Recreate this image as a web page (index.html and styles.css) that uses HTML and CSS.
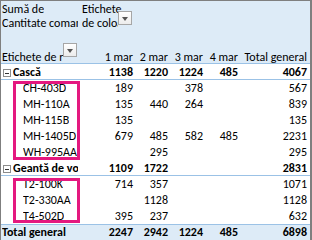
FILE: index.html
```html
<!DOCTYPE html>
<html lang="ro">
<head>
<meta charset="utf-8">
<title>PivotTable</title>
<link rel="stylesheet" href="styles.css">
</head>
<body>
<div class="sheet">
  <div class="pivot">
    <div class="row hdr">
      <div class="c"><span class="t">Sumă de</span></div>
      <div class="c"><span class="t">Etichete</span></div>
      <div class="c"></div><div class="c"></div><div class="c"></div><div class="c"></div>
    </div>
    <div class="row hdr">
      <div class="c"><span class="t">Cantitate comandată</span></div>
      <div class="c"><span class="t">de coloane</span><span class="dd dd-col"></span></div>
      <div class="c"></div><div class="c"></div><div class="c"></div><div class="c"></div>
    </div>
    <div class="row hdr">
      <div class="c"></div><div class="c"></div><div class="c"></div><div class="c"></div><div class="c"></div><div class="c"></div>
    </div>
    <div class="row hdr line-b">
      <div class="c"><span class="t">Etichete de rând</span><span class="dd dd-row"></span></div>
      <div class="c n">1 mar</div>
      <div class="c n">2 mar</div>
      <div class="c n">3 mar</div>
      <div class="c n">4 mar</div>
      <div class="c n">Total general</div>
    </div>

    <div class="row grp line-b">
      <div class="c"><span class="tog"></span><span class="t">Cască</span></div>
      <div class="c n">1138</div><div class="c n">1220</div><div class="c n">1224</div><div class="c n">485</div><div class="c n">4067</div>
    </div>
    <div class="row item">
      <div class="c anchor"><span class="t">CH-403D</span><span class="mark mark-1"></span></div>
      <div class="c n">189</div><div class="c n"></div><div class="c n">378</div><div class="c n"></div><div class="c n">567</div>
    </div>
    <div class="row item">
      <div class="c"><span class="t">MH-110A</span></div>
      <div class="c n">135</div><div class="c n">440</div><div class="c n">264</div><div class="c n"></div><div class="c n">839</div>
    </div>
    <div class="row item">
      <div class="c"><span class="t">MH-115B</span></div>
      <div class="c n">135</div><div class="c n"></div><div class="c n"></div><div class="c n"></div><div class="c n">135</div>
    </div>
    <div class="row item">
      <div class="c"><span class="t">MH-1405D</span></div>
      <div class="c n">679</div><div class="c n">485</div><div class="c n">582</div><div class="c n">485</div><div class="c n">2231</div>
    </div>
    <div class="row item">
      <div class="c"><span class="t">WH-995AA</span></div>
      <div class="c n"></div><div class="c n">295</div><div class="c n"></div><div class="c n"></div><div class="c n">295</div>
    </div>

    <div class="row grp line-b">
      <div class="c"><span class="tog"></span><span class="t">Geantă de voiaj</span></div>
      <div class="c n">1109</div><div class="c n">1722</div><div class="c n"></div><div class="c n"></div><div class="c n">2831</div>
    </div>
    <div class="row item">
      <div class="c anchor"><span class="t">T2-100K</span><span class="mark mark-2"></span></div>
      <div class="c n">714</div><div class="c n">357</div><div class="c n"></div><div class="c n"></div><div class="c n">1071</div>
    </div>
    <div class="row item">
      <div class="c"><span class="t">T2-330AA</span></div>
      <div class="c n"></div><div class="c n">1128</div><div class="c n"></div><div class="c n"></div><div class="c n">1128</div>
    </div>
    <div class="row item">
      <div class="c"><span class="t">T4-502D</span></div>
      <div class="c n">395</div><div class="c n">237</div><div class="c n"></div><div class="c n"></div><div class="c n">632</div>
    </div>

    <div class="row total">
      <div class="c"><span class="t">Total general</span></div>
      <div class="c n">2247</div><div class="c n">2942</div><div class="c n">1224</div><div class="c n">485</div><div class="c n">6898</div>
    </div>
  </div>
</div>
</body>
</html>
```
FILE: styles.css
```css
html, body {
  margin: 0;
  padding: 0;
  background: #ffffff;
}

.sheet {
  width: 309px;
  height: 239px;
  border-top: 1px solid #7f7f7f;
  border-left: 1px solid #7f7f7f;
  border-right: 2px solid #7f7f7f;
  overflow: hidden;
}

.pivot {
  display: grid;
  grid-template-columns: 80px 55px 35px 35px 35px 69px;
  grid-template-rows: 15px 14px 18px 16px repeat(11, 16px);
  font-family: "Carlito", "Lato", sans-serif;
  font-size: 12px;
  line-height: 13px;
  color: #000000;
}

.row {
  display: contents;
}

.c {
  display: flex;
  align-items: flex-end;
  padding: 0 3px 1px 1px;
  white-space: nowrap;
  min-width: 0;
}

.c.n {
  justify-content: flex-end;
}

.t {
  flex: 0 1 auto;
  min-width: 0;
  overflow: hidden;
}

.hdr > .c {
  background: #ddebf7;
  padding-bottom: 0;
}

.line-b > .c {
  box-shadow: inset 0 -1px 0 #9bc2e6;
}

.grp > .c {
  font-weight: 700;
}

.item > .c:first-child {
  padding-left: 22px;
}

.total > .c {
  background: #ddebf7;
  box-shadow: inset 0 1px 0 #9bc2e6;
  font-weight: 700;
}

/* filter dropdown buttons */
.dd {
  flex: none;
  align-self: flex-end;
  width: 12px;
  height: 12px;
  margin-left: auto;
  margin-right: 1px;
  border: 1px solid #a6a6a6;
  background: linear-gradient(#ffffff, #ececec);
  display: flex;
  align-items: center;
  justify-content: center;
}

.dd::after {
  content: "";
  width: 0;
  height: 0;
  border-left: 3.5px solid transparent;
  border-right: 3.5px solid transparent;
  border-top: 4px solid #555555;
  margin-top: 1px;
}

.dd-col {
  margin-bottom: 5px;
}

.dd-row {
  margin-bottom: 7px;
}

/* collapse toggle */
.tog {
  flex: none;
  width: 6px;
  height: 6px;
  margin: 0 2px 2px 1px;
  border: 1px solid #8c8c8c;
  background: #ffffff;
  display: flex;
  align-items: center;
  justify-content: center;
}

.tog::after {
  content: "";
  width: 4px;
  height: 1px;
  background: #333333;
}

/* pink highlight boxes (overlay spanning several rows) */
.anchor {
  position: relative;
}

.mark {
  position: absolute;
  left: 12px;
  width: 61px;
  border: 3px solid #e4187f;
  pointer-events: none;
}

.mark-1 {
  top: 1px;
  height: 73px;
}

.mark-2 {
  top: 2px;
  height: 39px;
}
```
